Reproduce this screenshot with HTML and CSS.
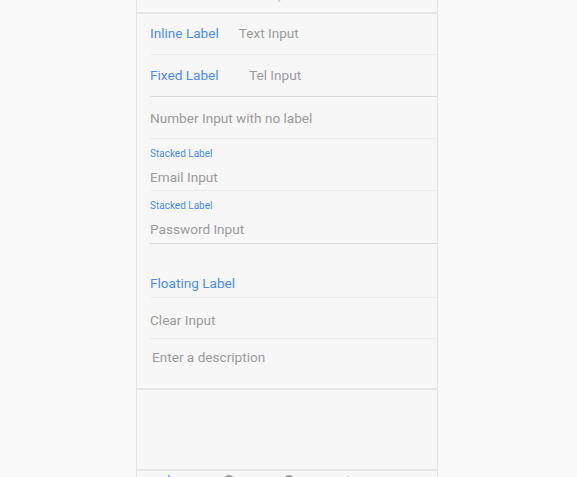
FILE: index.html
```html
<!DOCTYPE html>
<html>
<head>
<meta charset="utf-8">
<link rel="stylesheet" href="styles.css">
</head>
<body>
<div class="page">
  <div class="app">
    <div class="header"><span class="title">Inputs</span></div>
    <div class="list">
      <div class="item">
        <div class="inner r1">
          <span class="label inline">Inline Label</span>
          <span class="input">Text Input</span>
        </div>
      </div>
      <div class="item">
        <div class="inner dark r2">
          <span class="label fixed">Fixed Label</span>
          <span class="input">Tel Input</span>
        </div>
      </div>
      <div class="item">
        <div class="inner row3">
          <span class="input">Number Input with no label</span>
        </div>
      </div>
      <div class="item">
        <div class="inner stacked s1">
          <span class="label small">Stacked Label</span>
          <span class="input">Email Input</span>
        </div>
      </div>
      <div class="item">
        <div class="inner stacked s2 dark">
          <span class="label small">Stacked Label</span>
          <span class="input">Password Input</span>
        </div>
      </div>
      <div class="item">
        <div class="inner floating">
          <span class="label">Floating Label</span>
        </div>
      </div>
      <div class="item">
        <div class="inner row7">
          <span class="input">Clear Input</span>
        </div>
      </div>
      <div class="item textarea-item">
        <span class="input desc">Enter a description</span>
      </div>
    </div>
    <div class="spacer"></div>
    <div class="tabbar">
      <div class="tab"><svg width="10" height="10" viewBox="0 0 10 10"><rect x="3" y="0" width="2" height="10" fill="#8fb6fb"/></svg></div>
      <div class="tab"><svg width="12" height="10" viewBox="0 0 12 10"><circle cx="6" cy="6" r="5" fill="none" stroke="#9a9a9a" stroke-width="2"/></svg></div>
      <div class="tab"><svg width="12" height="10" viewBox="0 0 12 10"><circle cx="6" cy="6" r="5" fill="none" stroke="#9a9a9a" stroke-width="2"/></svg></div>
      <div class="tab"><svg width="10" height="10" viewBox="0 0 10 10"><rect x="4" y="1" width="2" height="9" fill="#c8c8c8"/></svg></div>
      <div class="tab"></div>
    </div>
  </div>
</div>
</body>
</html>
```

FILE: styles.css
```css
html, body {
  margin: 0;
  padding: 0;
}
body {
  background: #f9f9f9;
  font-family: Roboto, "Liberation Sans", sans-serif;
  overflow: hidden;
}
.page {
  padding-left: 136px;
  height: 477px;
}
.app {
  width: 300px;
  height: 477px;
  background: #f7f7f7;
  border-left: 1px solid #e3e3e3;
  border-right: 1px solid #e3e3e3;
  display: flex;
  flex-direction: column;
  overflow: hidden;
}
.header {
  height: 12px;
  border-bottom: 2px solid #e6e6e6;
  overflow: hidden;
  flex: none;
}
.title {
  display: block;
  text-align: center;
  font-size: 17px;
  line-height: 20px;
  color: #cfcfcf;
  margin-top: -17px;
}
.list {
  flex: none;
}
.item {
  padding-left: 13px;
}
.inner {
  height: 40px;
  border-bottom: 1px solid #ebebeb;
  display: flex;
  align-items: center;
  font-size: 13.6px;
  line-height: 20px;
}
.inner.dark {
  border-bottom-color: #dadada;
}
.inner.r1 {
  box-sizing: border-box;
  height: 41px;
  padding-bottom: 2px;
}
.inner.r2 {
  box-sizing: border-box;
  height: 42px;
  padding-bottom: 2px;
}
.row3 {
  height: 41px;
}
.label {
  color: #4a8bfc;
}
.label.inline {
  margin-right: 20px;
}
.label.fixed {
  width: 99px;
  flex: none;
}
.input {
  color: #9b9b9b;
}
.stacked {
  flex-direction: column;
  align-items: flex-start;
  justify-content: flex-start;
}
.stacked.s1 {
  height: 43px;
  padding-top: 8px;
}
.stacked.s2 {
  height: 44px;
  padding-top: 8px;
}
.label.small {
  font-size: 10px;
  line-height: 13px;
  margin-bottom: 7px;
}
.floating {
  height: 50px;
  padding-top: 3px;
  align-items: flex-end;
}
.floating .label {
  margin-bottom: 4px;
}
.row7 {
  height: 41px;
  padding-top: 3px;
  box-sizing: border-box;
}
.textarea-item {
  border-bottom: 2px solid #e6e6e6;
  padding-left: 15px;
  padding-top: 8px;
  box-sizing: border-box;
  height: 51px;
  font-size: 13.6px;
  line-height: 20px;
}
.desc {
  display: block;
}
.spacer {
  height: 79px;
  flex: none;
  border-bottom: 2px solid #e6e6e6;
}
.tabbar {
  flex: 1;
  display: flex;
  padding-top: 4px;
  padding-left: 3px;
}
.tab {
  width: 60px;
  display: flex;
  justify-content: center;
  align-items: flex-start;
}
.tab svg {
  display: block;
}
```
